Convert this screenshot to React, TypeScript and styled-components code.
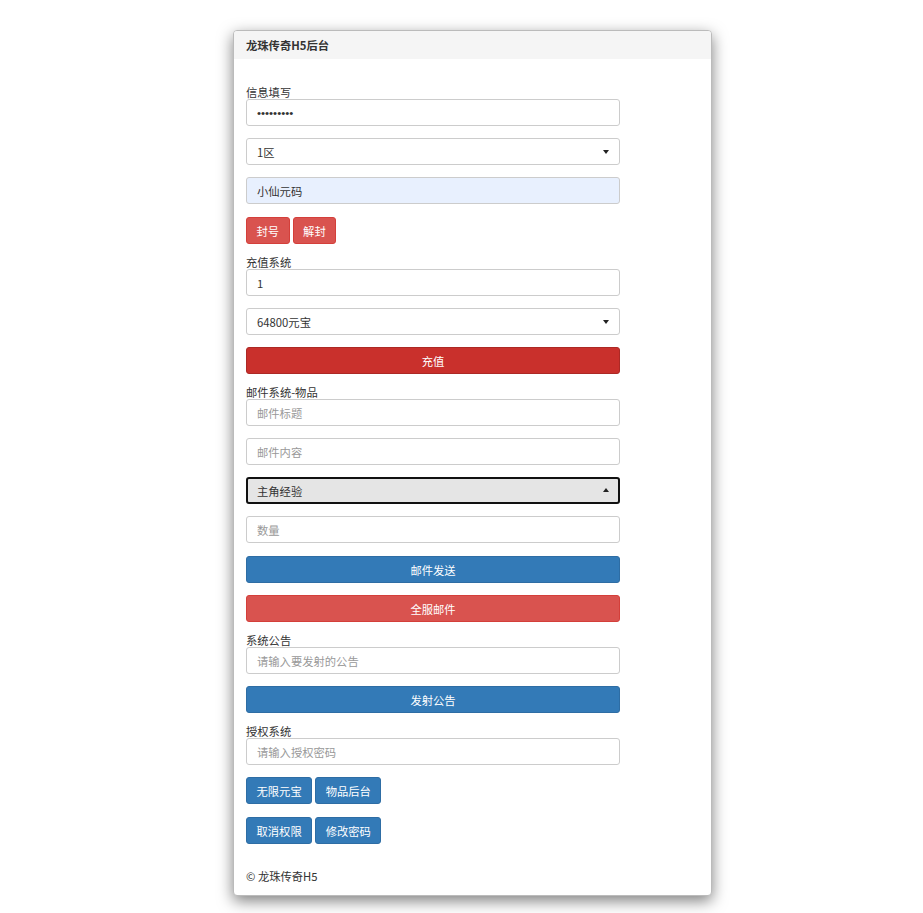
import React from "react";
import styled, { createGlobalStyle } from "styled-components";

const GlobalStyle = createGlobalStyle`
  html, body { margin: 0; padding: 0; background: #fff; }
  body {
    font-family: "Noto Sans CJK SC", "Microsoft YaHei", sans-serif;
    font-size: 11.3px;
    color: #333;
  }
  * { box-sizing: border-box; }
`;

const Page = styled.div`
  padding: 30px 0 20px 233px;
`;

const Card = styled.div`
  width: 479px;
  background: #fff;
  border: 1px solid #bbb;
  border-radius: 4px;
  box-shadow: 0 5px 15px rgba(0, 0, 0, 0.5);
  overflow: hidden;
`;

const Header = styled.div`
  height: 28px;
  background: #f5f5f5;
  padding: 0 12px;
  display: flex;
  align-items: center;
  font-weight: bold;
  color: #333;
`;

const Body = styled.div`
  padding: 27px 12px 12px;
  width: 400px;
`;

const Label = styled.div`
  height: 13px;
  line-height: 13px;
  color: #333;
  white-space: nowrap;
`;

const Field = styled.div<{ $mb?: number }>`
  margin-bottom: ${(p) => (p.$mb ?? 12)}px;
  position: relative;
  width: 374px;
`;

const Input = styled.input<{ $autofill?: boolean }>`
  display: block;
  width: 100%;
  height: 27px;
  padding: 0 10px;
  border: 1px solid #ccc;
  border-radius: 3px;
  background: ${(p) => (p.$autofill ? "#e8f0fe" : "#fff")};
  font: inherit;
  color: #333;
  outline: none;
  &::placeholder { color: #999; }
  &[type="password"] {
    font-family: "Liberation Sans", Arial, sans-serif;
    font-size: 11.5px;
    letter-spacing: 0;
  }
`;

const SelectBox = styled.select<{ $focused?: boolean }>`
  display: block;
  width: 100%;
  height: 27px;
  padding: 0 ${(p) => (p.$focused ? 9 : 10)}px;
  border: ${(p) => (p.$focused ? "2px solid #111" : "1px solid #ccc")};
  border-radius: 3px;
  background: ${(p) => (p.$focused ? "#e5e5e5" : "#fff")};
  font: inherit;
  color: #333;
  appearance: none;
  -webkit-appearance: none;
  outline: none;
`;

const Arrow = styled.span<{ $up?: boolean }>`
  position: absolute;
  right: 11px;
  top: 12px;
  width: 0;
  height: 0;
  border-left: 3.5px solid transparent;
  border-right: 3.5px solid transparent;
  ${(p) =>
    p.$up
      ? "border-bottom: 4px solid #222; top: 11px;"
      : "border-top: 4px solid #222;"}
  pointer-events: none;
`;

const colors = {
  danger: { bg: "#d9534f", border: "#d43f3a" },
  dangerActive: { bg: "#c9302c", border: "#ac2925" },
  primary: { bg: "#337ab7", border: "#2e6da4" },
};

type Variant = keyof typeof colors;

const Button = styled.button<{ $variant: Variant; $block?: boolean }>`
  display: ${(p) => (p.$block ? "flex" : "inline-flex")};
  width: ${(p) => (p.$block ? "100%" : "auto")};
  align-items: center;
  justify-content: center;
  height: 27px;
  padding: 0 9.5px;
  border: 1px solid ${(p) => colors[p.$variant].border};
  border-radius: 3px;
  background: ${(p) => colors[p.$variant].bg};
  color: #fff;
  font: inherit;
  cursor: pointer;
`;

const ButtonRow = styled.div<{ $mb?: number }>`
  display: flex;
  gap: 3px;
  margin-bottom: ${(p) => (p.$mb ?? 12)}px;
`;

const Footer = styled.div`
  margin-top: 25px;
  height: 14px;
  line-height: 14px;
  color: #333;
`;

function Select({ value, options, focused }: { value: string; options: string[]; focused?: boolean }) {
  return (
    <>
      <SelectBox $focused={focused} defaultValue={value}>
        {options.map((o) => (
          <option key={o}>{o}</option>
        ))}
      </SelectBox>
      <Arrow $up={focused} />
    </>
  );
}

export default function App() {
  return (
    <>
      <GlobalStyle />
      <Page>
        <Card>
          <Header>龙珠传奇H5后台</Header>
          <Body>
            <Label>信息填写</Label>
            <Field>
              <Input type="password" defaultValue="123456789" />
            </Field>
            <Field>
              <Select value="1区" options={["1区", "2区", "3区"]} />
            </Field>
            <Field $mb={13}>
              <Input $autofill defaultValue="小仙元码" />
            </Field>
            <ButtonRow>
              <Button $variant="danger">封号</Button>
              <Button $variant="danger">解封</Button>
            </ButtonRow>

            <Label>充值系统</Label>
            <Field>
              <Input defaultValue="1" />
            </Field>
            <Field>
              <Select value="64800元宝" options={["64800元宝", "32800元宝", "6480元宝"]} />
            </Field>
            <Field>
              <Button $variant="dangerActive" $block>充值</Button>
            </Field>

            <Label>邮件系统-物品</Label>
            <Field>
              <Input placeholder="邮件标题" />
            </Field>
            <Field>
              <Input placeholder="邮件内容" />
            </Field>
            <Field>
              <Select value="主角经验" options={["主角经验", "元宝", "金币"]} focused />
            </Field>
            <Field $mb={13}>
              <Input placeholder="数量" />
            </Field>
            <Field>
              <Button $variant="primary" $block>邮件发送</Button>
            </Field>
            <Field>
              <Button $variant="danger" $block>全服邮件</Button>
            </Field>

            <Label>系统公告</Label>
            <Field>
              <Input placeholder="请输入要发射的公告" />
            </Field>
            <Field>
              <Button $variant="primary" $block>发射公告</Button>
            </Field>

            <Label>授权系统</Label>
            <Field>
              <Input placeholder="请输入授权密码" />
            </Field>
            <ButtonRow $mb={13}>
              <Button $variant="primary">无限元宝</Button>
              <Button $variant="primary">物品后台</Button>
            </ButtonRow>
            <ButtonRow $mb={0}>
              <Button $variant="primary">取消权限</Button>
              <Button $variant="primary">修改密码</Button>
            </ButtonRow>

            <Footer>© 龙珠传奇H5</Footer>
          </Body>
        </Card>
      </Page>
    </>
  );
}
